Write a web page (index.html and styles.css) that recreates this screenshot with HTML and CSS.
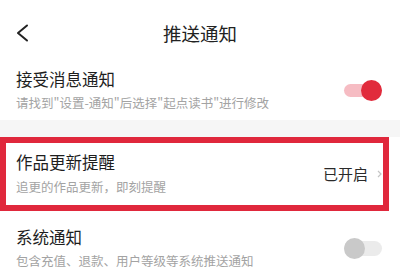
FILE: index.html
```html
<!DOCTYPE html>
<html lang="zh-CN">
<head>
    <meta charset="UTF-8">
    <meta name="viewport" content="width=device-width, initial-scale=1.0">
    <title>推送通知</title>
    <link rel="stylesheet" href="styles.css">
</head>
<body>

    <div class="header">
        <div class="header-back">
            <svg width="14" height="18" viewBox="0 0 14 18">
                <polyline points="11,1.5 2,9 11,16.5" fill="none" stroke="#222" stroke-width="2" stroke-linecap="round" stroke-linejoin="round"/>
            </svg>
        </div>
        <div class="header-title">推送通知</div>
    </div>

    <div class="item item-first">
        <div class="item-text">
            <div class="item-title">接受消息通知</div>
            <div class="item-desc">请找到"设置-通知"后选择"起点读书"进行修改</div>
        </div>
        <div class="switch on"></div>
    </div>

    <div class="divider"></div>

    <!-- highlighted row -->
    <div class="item item-marked">
        <div class="item-text">
            <div class="item-title">作品更新提醒</div>
            <div class="item-desc">追更的作品更新，即刻提醒</div>
        </div>
        <div class="item-state">
            <span>已开启</span>
            <svg width="5" height="8" viewBox="0 0 5 8">
                <polyline points="1,1 4,4 1,7" fill="none" stroke="#c4c4c4" stroke-width="1.2"/>
            </svg>
        </div>
    </div>

    <div class="item item-last">
        <div class="item-text">
            <div class="item-title">系统通知</div>
            <div class="item-desc">包含充值、退款、用户等级等系统推送通知</div>
        </div>
        <div class="switch"></div>
    </div>

</body>
</html>
```

FILE: styles.css
```css
body {
    font-family: "Noto Sans CJK SC", "Noto Sans", sans-serif;
    margin: 0;
    padding: 0;
    width: 400px;
    height: 277px;
    overflow: hidden;
    background-color: #ffffff;
    color: #1e1e1e;
}

/* Header */
.header {
    display: flex;
    align-items: center;
    justify-content: center;
    height: 62px;
    position: relative;
}

.header-back {
    position: absolute;
    left: 16px;
    top: 24px;
    line-height: 0;
}

.header-title {
    font-size: 18.5px;
    font-weight: 400;
    line-height: 22px;
    margin-top: 4px;
    color: #222222;
}

/* Rows */
.item {
    display: flex;
    align-items: center;
    justify-content: space-between;
    padding: 0 18px 0 16px;
}

.item-first {
    padding-top: 7px;
    padding-bottom: 9px;
}

.item-marked {
    border: 6px solid #e0283c;
    width: 389px;
    box-sizing: border-box;
    padding: 9px 1px 10px 10px;
}

.item-last {
    padding-top: 16px;
}

.item-title {
    font-size: 16.5px;
    line-height: 21px;
}

.item-desc {
    font-size: 12.5px;
    line-height: 16px;
    color: #a3a3a3;
    margin-top: 5px;
}

.item-marked .item-desc {
    margin-top: 6px;
}

.item-state {
    display: flex;
    align-items: center;
    gap: 9px;
    font-size: 15px;
    color: #2a2a2a;
}

.divider {
    height: 17px;
    background-color: #f6f6f6;
}

/* Switch */
.switch {
    position: relative;
    width: 38px;
    height: 21px;
}

.switch::before {
    content: "";
    position: absolute;
    left: 0;
    right: 0;
    top: 3px;
    height: 15px;
    border-radius: 8px;
    background-color: #ebebeb;
}

.switch::after {
    content: "";
    position: absolute;
    left: 0;
    top: 0;
    width: 21px;
    height: 21px;
    border-radius: 50%;
    background-color: #c9c9c9;
}

.switch.on::before {
    background-color: #f6bcc3;
    top: 4px;
    height: 13px;
}

.switch.on::after {
    left: auto;
    right: 0;
    background-color: #e12b3c;
}
```
